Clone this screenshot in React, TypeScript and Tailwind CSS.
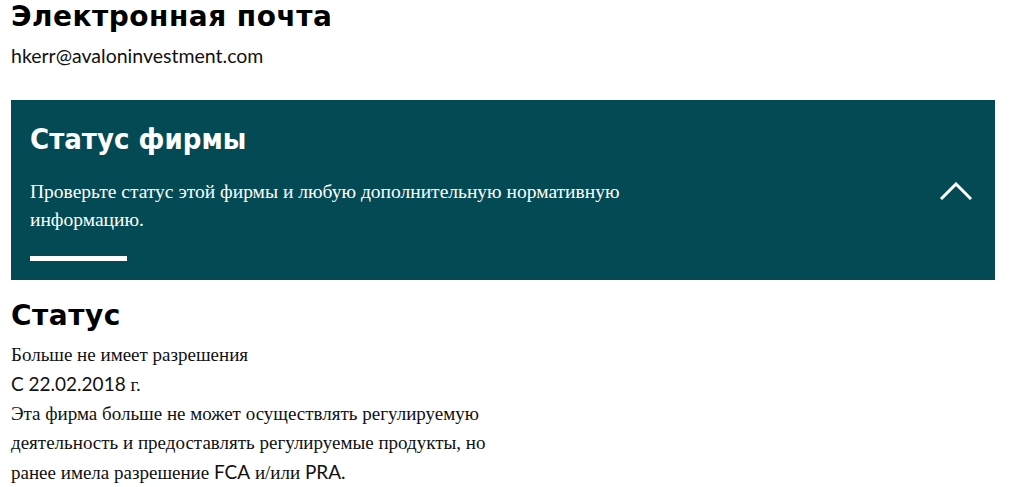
export default function App() {
  const serif = { fontFamily: '"Liberation Serif", "Times New Roman", serif' }
  const lato = 'font-["Lato","Liberation_Sans",sans-serif]'

  return (
    <div className="min-h-screen bg-white text-black pl-[11px] pr-[29px]">
      {/* Email */}
      <h2 className='font-["DejaVu_Sans",sans-serif] font-bold text-[28px] leading-[34px] tracking-[0.5px]'>
        Электронная почта
      </h2>
      <p className={`${lato} text-[19.5px] leading-[24px] mt-[10px] text-[#111]`}>hkerr@avaloninvestment.com</p>

      {/* Firm status panel */}
      <section className="mt-[32px] bg-[#034a54] text-white pl-[19px] pr-[23px] pt-[21px] pb-[19px] flex items-center justify-between">
        <div>
          <h3 className='font-["DejaVu_Sans_Condensed","DejaVu_Sans",sans-serif] font-bold text-[29px] leading-[36px]'>
            Статус фирмы
          </h3>
          <p className="text-[19.5px] leading-[28px] mt-[21px] w-[640px]" style={serif}>
            Проверьте статус этой фирмы и любую дополнительную нормативную информацию.
          </p>
          <div className="mt-[22px] h-[5px] w-[97px] bg-white" />
        </div>
        <button aria-label="Свернуть">
          <svg width="32" height="18" viewBox="0 0 32 18" fill="none" stroke="white" strokeWidth="3" strokeLinecap="square">
            <path d="M2 16 L16 2 L30 16" />
          </svg>
        </button>
      </section>

      {/* Status */}
      <h2 className='font-["DejaVu_Sans",sans-serif] font-bold text-[28px] leading-[34px] mt-[19px] tracking-[0.5px]'>
        Статус
      </h2>
      <div className="text-[19px] leading-[29px] text-[#111] w-[500px] mt-[7px]" style={serif}>
        <p>Больше не имеет разрешения</p>
        <p>
          <span className={lato}>С 22.02.2018</span> г.
        </p>
        <p>
          Эта фирма больше не может осуществлять регулируемую деятельность и предоставлять регулируемые продукты, но
          ранее имела разрешение <span className={lato}>FCA</span> и/или <span className={lato}>PRA.</span>
        </p>
      </div>
    </div>
  )
}
